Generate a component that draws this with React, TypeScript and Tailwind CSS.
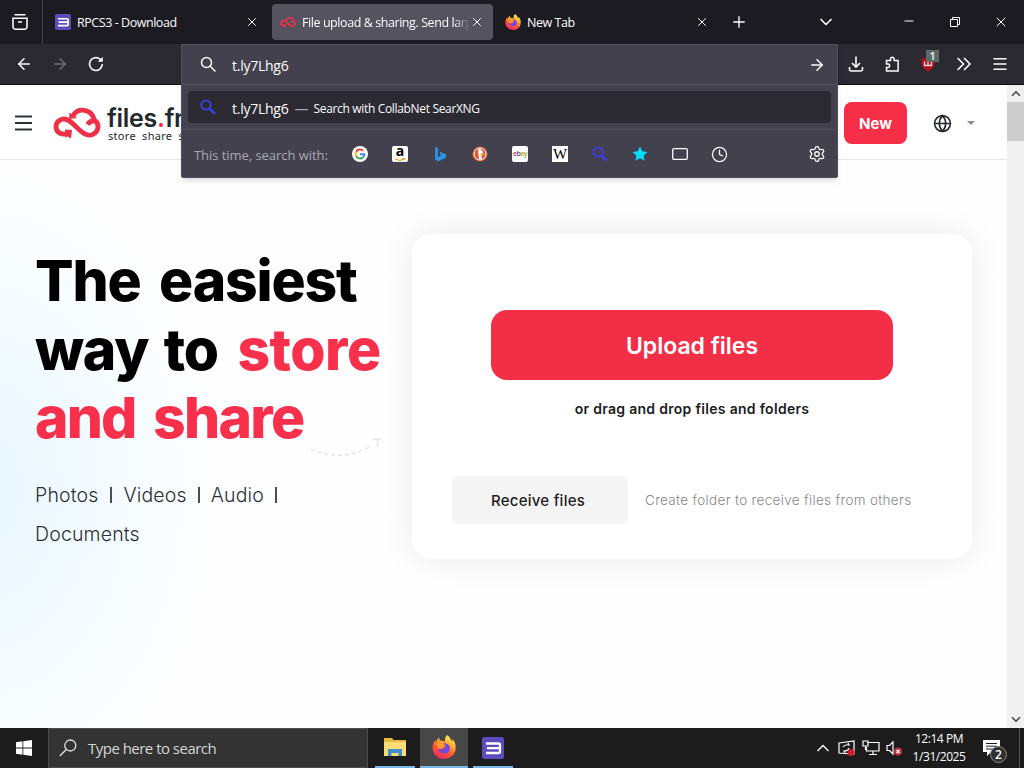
import type { ReactNode } from 'react'
import { ArrowLeft, ArrowRight, ChevronDown, ChevronUp, Clock, Globe, Menu, Minus, Plus, Settings, X } from 'lucide-react'

const ui = "font-['Open_Sans','Noto_Sans',sans-serif]"
const site = "font-['Inter','Liberation_Sans',sans-serif]"

// --- Brand marks ---

function FilesMark({ className, width = 4.8 }: { className?: string; width?: number }) {
  return (
    <svg viewBox="0 0 48 34" className={className} fill="none" stroke="#ee3048" strokeWidth={width}>
      <path d="M15 27.500C8 29.500 3 26 3 21s4-8 8-8c9 0 14 14 24 16 5.500.8 10-3.500 10-8.500 0-3-2-5.500-4-6.500C40 7 34 3.800 28.500 4.200 24 4.500 21.500 7 20 10" />
      <path d="M34.500 18.500c2-3 4-4 7.500-4" />
      <path d="M12 23.500l7 .5-1 8.500-3.500-2-2.500 1z M16.500 6.500l7.500 5.500-8 1z" fill="#ee3048" stroke="none" />
    </svg>
  )
}

function FirefoxMark({ className }: { className?: string }) {
  return (
    <svg viewBox="0 0 24 24" className={className}>
      <defs>
        <linearGradient id="fox" x1="0.8" y1="0" x2="0.3" y2="1">
          <stop offset="0" stopColor="#fff36b" />
          <stop offset="0.35" stopColor="#ffab2e" />
          <stop offset="0.65" stopColor="#ff5634" />
          <stop offset="1" stopColor="#ec2567" />
        </linearGradient>
      </defs>
      <path
        fill="url(#fox)"
        d="M15 0c3 2 4 4.500 4.500 6 1-.2 1-1.500.8-2 3 3 3.400 6 3.400 9A11.500 11 0 0 1 12 24 11.500 11 0 0 1 .5 13c0-3 1-6 3-8 0 1 .2 2 .5 2.500C4.500 5 6 3 7.500 2.500 7.200 4 7.500 5 8 5.500c2 0 4 .5 5 1.500C12.500 4 13.500 1.500 15 0z"
      />
      <path fill="#7545e0" d="M12 8.200c3.800 0 6 2.500 6 5.300 0 3-2.600 5-5.700 5-3.600 0-5.800-2.300-6-5 1.700 1.300 3.500 1 4.700 0L14 12c-2 0-3-1-4.500-1z" />
      <path fill="#ff9a30" d="M4 8.500c2-1.500 4.500-1 6 .2l3.500 1c0 1-1.500 1.800-2.500 2.300-1 1.500-3 2-4.500 1.200z" />
    </svg>
  )
}

function RpcsMark({ className }: { className?: string }) {
  return (
    <svg viewBox="0 0 22 22" className={className}>
      <rect width="22" height="22" rx="2.500" fill="#5c4dbd" />
      <path d="M4 6.500h12.500q1.500 0 1.500 1.500v6.500q0 1.500-1.500 1.500H4M5 11.200h12" fill="none" stroke="#fff" strokeWidth="2.300" />
    </svg>
  )
}

// --- Browser chrome ---

function Tab({ icon, title, active }: { icon: ReactNode; title: string; active?: boolean }) {
  return (
    <div
      className={
        active
          ? 'flex h-9 w-[221px] items-center rounded bg-[#55535f] pl-2 text-[#fbfbfe]'
          : 'flex h-9 w-[221px] items-center rounded pl-2 text-[#fbfbfe]'
      }
    >
      <span className="flex size-4 items-center">{icon}</span>
      <span
        className={
          active
            ? 'mt-0.5 ml-1.5 w-[168px] overflow-hidden text-[12.5px] tracking-[-0.43px] whitespace-nowrap [mask-image:linear-gradient(to_left,transparent,black_16px)]'
            : 'mt-0.5 ml-1.5 w-[168px] overflow-hidden text-[12.5px] tracking-[-0.45px] whitespace-nowrap'
        }
      >
        {title}
      </span>
      <X className="size-3.5" strokeWidth={1.7} />
    </div>
  )
}

function TabBar() {
  return (
    <div className="flex h-11 shrink-0 items-center bg-[#1c1b22] text-[#fbfbfe]">
      <div className="flex h-full w-[43px] items-center justify-center border-r border-[#44434c] pr-0.5">
        <svg viewBox="0 0 18 18" className="size-[18px]" fill="none" stroke="currentColor" strokeWidth="1.600">
          <path d="M3.500 1.800h11M2 5.200h14v8.500a2.500 2.500 0 0 1-2.500 2.500h-9A2.500 2.500 0 0 1 2 13.700zM7 9h4" />
        </svg>
      </div>
      <div className="ml-1 flex gap-1">
        <Tab icon={<RpcsMark className="size-4" />} title="RPCS3 - Download" />
        <Tab icon={<FilesMark className="h-3 w-4" width={5} />} title="File upload & sharing. Send larg" active />
        <Tab icon={<FirefoxMark className="size-4" />} title="New Tab" />
      </div>
      <Plus className="ml-3 size-[18px]" strokeWidth={1.8} />
      <ChevronDown className="ml-[68px] size-5" strokeWidth={2} />
      <div className="ml-auto flex">
        <span className="flex w-[46px] justify-center">
          <Minus className="size-3.5" strokeWidth={1.7} />
        </span>
        <span className="flex w-[46px] justify-center pt-0.5">
          <svg viewBox="0 0 12 12" className="size-3" fill="none" stroke="currentColor">
            <path d="M1.500 3.500h7v7h-7zM3.500 3.500v-2h7v7h-2" />
          </svg>
        </span>
        <span className="flex w-[46px] justify-center">
          <X className="size-4" strokeWidth={1.500} />
        </span>
      </div>
    </div>
  )
}

function NavBar() {
  return (
    <div className="flex h-[41px] shrink-0 items-center border-b border-[#0c0c10] bg-[#2b2a33] px-[15px] text-[#fbfbfe]">
      <div className="flex items-center gap-[18px]">
        <ArrowLeft className="size-[18px]" strokeWidth={2} />
        <ArrowRight className="size-[18px] text-[#6f6e76]" strokeWidth={2} />
        <svg viewBox="0 0 18 18" className="size-[18px]" fill="none" stroke="currentColor" strokeWidth="1.600">
          <path d="M15.300 9A6.400 6.400 0 1 1 13 4.100l1.500 1.400" />
          <path d="M15.800 1.800v5h-5z" fill="currentColor" stroke="none" />
        </svg>
      </div>
      <div className="ml-auto flex items-center gap-[18px]">
        <svg viewBox="0 0 18 18" className="size-[18px]" fill="none" stroke="currentColor" strokeWidth="1.600">
          <path d="M9 1.500v10M5 8l4 4 4-4M2.500 12v2a2 2 0 0 0 2 2h9a2 2 0 0 0 2-2v-2" />
        </svg>
        <svg viewBox="0 0 18 18" className="size-[18px]" fill="none" stroke="currentColor" strokeWidth="1.500">
          <path d="M3.500 5.500h4V4a1.800 1.800 0 0 1 3.600 0v1.500h4V16H3.500v-3.500H5a1.700 1.700 0 0 0 0-3.400H3.500z" />
        </svg>
        <span className="relative flex size-[18px] items-center justify-center">
          <svg viewBox="0 0 18 18" className="size-[18px]">
            <path d="M9 2l7 2c0 6.500-2 10-7 12.500C4 14 2 10.500 2 4z" fill="#b00d1d" />
            <path d="M5.500 6.500v4h7v-4M9 6.500v4" fill="none" stroke="#f5dada" strokeWidth="1.300" />
          </svg>
          <span className="absolute -top-[5px] left-[7px] h-3 w-[13px] bg-[#5c6a67] text-center text-[10px]/3 font-semibold">1</span>
        </span>
        <svg viewBox="0 0 18 18" className="size-[18px]" fill="none" stroke="currentColor" strokeWidth="1.600">
          <path d="M2.500 3l6 6-6 6M9 3l6 6-6 6" />
        </svg>
        <Menu className="size-[18px]" strokeWidth={1.900} />
      </div>
    </div>
  )
}

function SearxMark({ className }: { className?: string }) {
  return (
    <svg viewBox="0 0 16 16" className={className} fill="none" stroke="#3a3fd8">
      <circle cx="6" cy="6" r="4.600" strokeWidth="2" />
      <path d="M9.500 9.500l5.300 5.300" strokeWidth="2.800" />
    </svg>
  )
}

const engines = [
  <svg viewBox="0 0 16 16" className="size-4" fill="none" strokeWidth="2">
    <circle cx="8" cy="8" r="8" fill="#fff" />
    <path d="M11.200 4.900A4.400 4.400 0 0 0 4.200 5.800" stroke="#ea4335" />
    <path d="M4.200 5.800a4.400 4.400 0 0 0 0 4.400" stroke="#fbbc05" />
    <path d="M4.200 10.200a4.400 4.400 0 0 0 6.700 1.200" stroke="#34a853" />
    <path d="M10.900 11.400A4.400 4.400 0 0 0 12.400 8.200H8" stroke="#4285f4" />
  </svg>,
  <span className="flex size-4 flex-col items-center rounded-xs bg-white text-[14px]/[10px] font-bold text-black">
    a
    <svg viewBox="0 0 14 5" className="mt-0.5 h-1 w-3.5" fill="none" stroke="#f0a030" strokeWidth="1.600">
      <path d="M1 1q6 4 11 0M10 0l3 0-1 3" />
    </svg>
  </span>,
  <svg viewBox="0 0 16 16" className="size-4">
    <path d="M3 1l3 1v9.500L3 14z" fill="#2b8de8" />
    <path d="M3 13l3-2 3-1.500-1.500-4L14 8.500v3L6 15.500z" fill="#2a96e4" />
  </svg>,
  <svg viewBox="0 0 16 16" className="size-4">
    <circle cx="8" cy="8" r="7.600" fill="#de5833" />
    <circle cx="8" cy="8" r="6" fill="none" stroke="#fff" />
    <path d="M6 3q5 0 5 4l-2 1 1 5H7z" fill="#fff" />
    <path d="M8.500 8h3.500v1.500H8.500z" fill="#f0b429" />
  </svg>,
  <span className="flex size-4 items-center justify-center rounded-xs bg-white text-[7px] font-semibold tracking-[-0.5px]">
    <span className="text-[#c33b45]">e</span>
    <span className="text-[#3550a8]">b</span>
    <span className="text-[#d0a823]">a</span>
    <span className="text-[#82ac2c]">y</span>
  </span>,
  <span className="flex size-4 items-center justify-center overflow-hidden bg-white font-['Liberation_Serif',serif] text-[15px]/4 text-black">
    W
  </span>,
  <SearxMark className="size-4" />,
  <svg viewBox="0 0 16 16" className="size-4" fill="#00ddff">
    <path d="M8 .5l2.300 4.700 5.200.8-3.800 3.600.9 5.200L8 12.300l-4.600 2.500.9-5.200L.5 6l5.200-.8z" />
  </svg>,
  <svg viewBox="0 0 16 16" className="size-4" fill="none" stroke="#fbfbfe" strokeWidth="1.300">
    <rect x="0.700" y="2.700" width="14.600" height="10.600" rx="1.200" />
  </svg>,
  <Clock className="mr-px size-[17px] text-[#fbfbfe]" strokeWidth={1.800} />,
]

function UrlPopup() {
  return (
    <div className="absolute top-11 left-[181px] h-[134px] w-[657px] rounded-b-xs border border-[#52515e] bg-[#42414d] text-[#fbfbfe] shadow-md">
      <div className="flex h-10 items-center border-b border-[#52515e] pr-[11px] pl-[18px]">
        <svg viewBox="0 0 17 17" className="size-[17px]" fill="none" stroke="currentColor" strokeWidth="1.500">
          <circle cx="6.500" cy="6.500" r="5" />
          <path d="M10 10l5.500 5.500" />
        </svg>
        <span className="mt-0.5 ml-[15px] text-[14px] tracking-[-0.25px]">t.ly7Lhg6</span>
        <ArrowRight className="ml-auto size-[18px]" strokeWidth={2} />
      </div>
      <div className="mx-[6px] mt-[6px] flex h-8 items-center rounded bg-[#2b2a33] pl-3">
        <SearxMark className="size-4" />
        <span className="mt-0.5 ml-4 text-[14px] tracking-[-0.25px]">t.ly7Lhg6</span>
        <span className="mt-0.5 ml-[6px] text-[14px] text-[#a5a4ad]">—</span>
        <span className="mt-[3px] ml-[5px] text-[12px] tracking-[-0.33px]">Search with CollabNet SearXNG</span>
      </div>
      <div className="mt-[6px] flex h-[47px] items-center border-t border-[#4f4e5a] pt-0.5 pl-3">
        <span className="w-[146px] pt-[3px] text-[13px] tracking-[-0.05px] whitespace-nowrap text-[#a9a8b2]">This time, search with:</span>
        {engines.map((engine, i) => (
          <span key={i} className="flex w-10 justify-center">
            {engine}
          </span>
        ))}
        <Settings className="mr-[11px] ml-auto size-[18px]" strokeWidth={1.700} />
      </div>
    </div>
  )
}

// --- Web page ---

function SiteHeader() {
  return (
    <header className="flex h-[75px] shrink-0 items-center border-b border-[#e7e7e9] bg-white pt-0.5 pl-[15px]">
      <svg viewBox="0 0 18 16" className="h-4 w-[18px]" stroke="#2f3338" strokeWidth="1.800">
        <path d="M0 1.500h17M0 8h17M0 14.500h17" />
      </svg>
      <FilesMark className="ml-5 h-[34px] w-12" />
      <div className="ml-[6px] w-[75px] whitespace-nowrap text-[#25282c]">
        <div className="text-[25px]/[22px] font-semibold tracking-[-0.3px]">
          files<span className="text-[#ee3048]">.</span>fm
        </div>
        <div className="mt-0.5 ml-px font-['Noto_Sans',sans-serif] text-[11px]/[9px] tracking-[0.3px] [word-spacing:3px]">store share send</div>
      </div>
      <div className="ml-auto flex items-center pr-8">
        <span className="flex h-[42px] w-[63px] items-center justify-center rounded-lg bg-[#f62e48] pt-0.5 text-[15px] font-bold text-white">New</span>
        <Globe className="ml-[26px] size-[19px] text-[#25282c]" strokeWidth={2} />
        <svg viewBox="0 0 8 4" className="ml-[15px] h-1 w-2" fill="#8b8b8b">
          <path d="M0 0h8L4 4z" />
        </svg>
      </div>
    </header>
  )
}

function Hero() {
  return (
    <section className="relative w-[412px] shrink-0 pt-[87px] pl-[35px]">
      <h1 className="text-[57px]/[68.500px] font-extrabold tracking-[-1.1px] whitespace-nowrap text-black">
        The <span className="ml-[7px] tracking-[-1.2px]">easiest</span>
        <br />
        way <span className="ml-1">to</span> <span className="ml-2 tracking-[-0.5px] text-[#f9304c]">store</span>
        <br />
        <span className="tracking-[-1.9px] text-[#f9304c]">
          and <span className="ml-[7px] tracking-[-1.7px]">share</span>
        </span>
      </h1>
      <p className="mt-[23px] flex w-[280px] flex-wrap items-center text-[19.500px]/[39px] font-light tracking-[0.15px] text-[#2c3035]">
        <span>Photos</span>
        <span className="mr-[11px] ml-3 h-4 w-0.5 bg-[#4a4e53]" />
        <span>Videos</span>
        <span className="mx-[11px] h-4 w-0.5 bg-[#4a4e53]" />
        <span>Audio</span>
        <span className="mx-[11px] h-4 w-0.5 bg-[#4a4e53]" />
        <span>Documents</span>
      </p>
      <svg viewBox="0 0 76 24" className="absolute top-[274px] left-[308px] h-6 w-[76px]" fill="none" stroke="#dcdee0">
        <path d="M3 15q29 14 60-3" strokeDasharray="4 3" />
        <path d="M65 5h8M70 5l-1 8" />
      </svg>
    </section>
  )
}

function UploadCard() {
  return (
    <section className="mt-[74px] flex h-[325px] w-[560px] flex-col items-center rounded-[20px] bg-white pt-[76px] shadow-[0_0_34px_rgba(0,0,0,0.08)]">
      <button className="h-[70px] w-[402px] rounded-2xl bg-[#f32e47] pt-0.5 text-[23px] font-semibold text-white">Upload files</button>
      <p className="mt-[19px] text-[14px]/5 font-semibold tracking-[0.3px] text-[#1b1d20]">or drag and drop files and folders</p>
      <div className="mt-[57px] flex w-full items-center pl-10">
        <button className="h-12 w-44 rounded-lg bg-[#f4f4f4] pt-0.5 pr-1 text-[15px] font-medium tracking-[0.25px] text-[#1e2023]">Receive files</button>
        <span className="ml-[17px] text-[13.500px] font-light tracking-[0.32px] whitespace-nowrap text-[#888]">Create folder to receive files from others</span>
      </div>
    </section>
  )
}

function ScrollBar() {
  return (
    <div className="flex w-[17px] shrink-0 flex-col items-center bg-[#f0f0f0] text-[#505050]">
      <ChevronUp className="h-[17px] w-3.5" strokeWidth={3} />
      <div className="h-[39px] w-full bg-[#cdcdcd]" />
      <ChevronDown className="mt-auto h-[17px] w-3.5" strokeWidth={3} />
    </div>
  )
}

function WebPage() {
  return (
    <div className="flex min-h-0 flex-1">
      <div className={`${site} flex min-w-0 flex-1 flex-col bg-[#fefefe]`}>
        <SiteHeader />
        <main className="flex flex-1 bg-[radial-gradient(ellipse_240px_330px_at_-20px_330px,#e9f7ff,#f4fbff_55%,#fefefe)]">
          <Hero />
          <UploadCard />
        </main>
      </div>
      <ScrollBar />
    </div>
  )
}

// --- Windows taskbar ---

function TaskBar() {
  return (
    <footer className="flex h-10 shrink-0 bg-[#1c1c1c] text-white">
      <div className="flex w-12 items-center justify-center">
        <svg viewBox="0 0 16 16" className="size-4" fill="#fff">
          <path d="M0 2.200l6.500-.9v6.300H0zM7.300 1.200L16 0v7.600H7.300zM0 8.400h6.500v6.300L0 13.800zM7.300 8.400H16V16l-8.700-1.200z" />
        </svg>
      </div>
      <div className="flex w-80 items-center border border-[#4c4c4c] bg-[#333] pl-[10px]">
        <svg viewBox="0 0 18 18" className="size-[18px]" fill="none" stroke="#e4e4e4" strokeWidth="1.300">
          <circle cx="11.300" cy="6.500" r="5.500" />
          <path d="M7.300 10.500L.8 17" />
        </svg>
        <span className="ml-[11px] text-[15px] tracking-[-0.52px] text-[#d5d5d5]">Type here to search</span>
      </div>
      <div className="ml-[3px] flex">
        <div className="flex w-12 justify-center pt-[9px]">
          <div className="flex h-[31px] w-10 flex-col items-center border-b-2 border-[#79b9e8]">
            <svg viewBox="0 0 22 20" className="h-5 w-[22px]">
              <path d="M0 1h8l1.500 2H22v16H0z" fill="#e9b93c" />
              <path d="M0 5h22v14H0z" fill="#fbdc77" />
              <path d="M4 19v-7h14v7h-3.500v-3h-7v3z" fill="#3f8fcd" />
            </svg>
          </div>
        </div>
        <div className="ml-px flex w-12 justify-center border-b-2 border-[#79b9e8] bg-[#474747] pt-[7px]">
          <FirefoxMark className="size-6" />
        </div>
        <div className="ml-px flex w-12 justify-center pt-[9px]">
          <div className="flex h-[31px] w-10 flex-col items-center border-b-2 border-[#79b9e8]">
            <RpcsMark className="size-[22px]" />
          </div>
        </div>
      </div>
      <div className="ml-auto flex items-center">
        <svg viewBox="0 0 12 8" className="h-2 w-3" fill="none" stroke="#fff" strokeWidth="1.300">
          <path d="M.5 7L6 1.500 11.500 7" />
        </svg>
        <svg viewBox="0 0 18 18" className="ml-[9px] size-[18px]" fill="none" stroke="#fff" strokeWidth="1.200">
          <path d="M1 4l15-2v13L1 14zM5 8q2-3 6-2l-1-2M11 9q-1 3-5 3l1 1.500" />
          <circle cx="13" cy="13.500" r="3.500" fill="#cf1f2b" stroke="none" />
        </svg>
        <svg viewBox="0 0 18 18" className="ml-[6px] size-[18px]" fill="none" stroke="#fff" strokeWidth="1.200">
          <path d="M5 3.500h12v8.500H4.500V8M11 12v3M7 15.500h8M1 2h5v5H1zM3.500 7v4" />
        </svg>
        <svg viewBox="0 0 18 18" className="ml-[6px] size-[18px]" fill="none" stroke="#fff" strokeWidth="1.200">
          <path d="M1 6.500h2.500L7 3v12l-3.500-3.500H1z" />
          <circle cx="12" cy="12.500" r="4" fill="#c5303f" stroke="none" />
          <path d="M10.500 11l3 3M13.500 11l-3 3" />
        </svg>
        <div className="ml-[6px] w-[58px] pb-px text-center text-[12px]/[18px] tracking-[-0.45px] whitespace-nowrap">
          12:14 PM
          <br />
          1/31/2025
        </div>
        <span className="relative mr-[18px] ml-[15px] block h-[18px] w-[18px]">
          <svg viewBox="0 0 18 18" className="size-[18px]">
            <path d="M0 1h17v12H8l-4 4v-4H0z" fill="#fff" />
            <path d="M3 4.500h11M3 7.200h11M3 10h7" stroke="#1c1c1c" />
          </svg>
          <span className="absolute top-[7px] left-[7px] flex size-[17px] items-center justify-center rounded-full border border-[#8a8a8a] bg-[#303030] text-[12px] font-semibold">
            2
          </span>
        </span>
        <div className="h-full w-[5px] border-l border-[#555]" />
      </div>
    </footer>
  )
}

export default function App() {
  return (
    <div className={`${ui} relative flex h-[768px] w-[1024px] flex-col overflow-hidden bg-white`}>
      <TabBar />
      <NavBar />
      <WebPage />
      <TaskBar />
      <UrlPopup />
    </div>
  )
}
